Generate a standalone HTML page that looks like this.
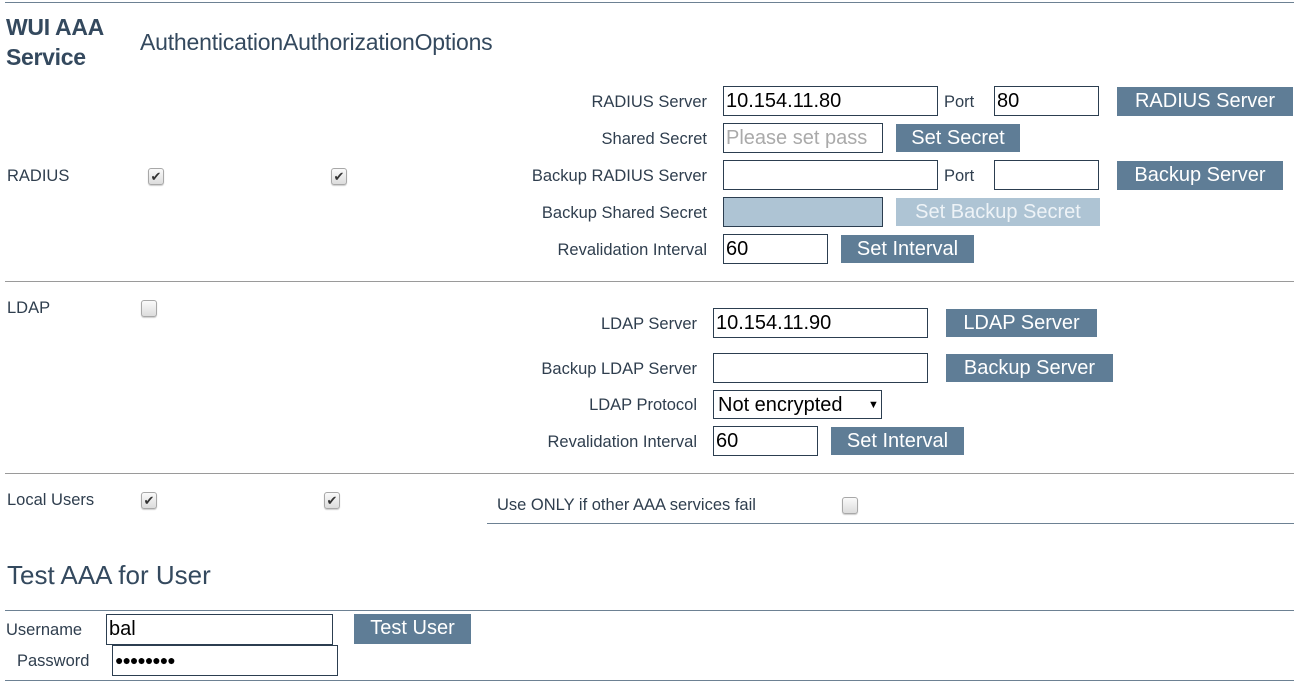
<!DOCTYPE html>
<html><head><meta charset="utf-8"><style>
body{margin:0;width:1294px;height:685px;background:#fff;position:relative;overflow:hidden;font-family:"Liberation Sans","DejaVu Sans",sans-serif;color:#2f3e4e}
div,span{position:absolute;box-sizing:border-box}
.hr{height:1px}
.t{font-size:16.5px;line-height:20px;white-space:nowrap}
.r{text-align:right;left:0}
.i{border:1px solid #2c3e50;background:#fff;font-family:"Liberation Sans",sans-serif;font-size:20px;color:#000;line-height:28px;padding-left:2px;white-space:nowrap;overflow:hidden}
.b{background:#5f7d96;color:#fff;font-family:"Liberation Sans",sans-serif;font-size:20px;text-align:center;line-height:28px;white-space:nowrap}
.c{width:16px;height:17px;border:1px solid #a8a8a8;border-radius:3px;background:linear-gradient(#fafafa,#dcdcdc);box-shadow:0 1px 1px #ccc;font-size:13px;line-height:15px;text-align:center;color:#333}
</style></head><body>
<div class="hr" style="left:5px;top:2px;width:1289px;background:#6d8193"></div>
<div style="left:6px;top:12px;font-size:23px;line-height:30px;font-weight:bold;color:#34495e;letter-spacing:-0.3px">WUI AAA<br>Service</div>
<div style="left:140px;top:27px;font-size:23px;line-height:30px;color:#34495e;letter-spacing:-0.2px">AuthenticationAuthorizationOptions</div>

<div class="t" style="left:7px;top:166px">RADIUS</div>
<div class="c" style="left:148px;top:168px">✔</div>
<div class="c" style="left:331px;top:168px">✔</div>

<div class="t r" style="width:707px;top:92px">RADIUS Server</div>
<div class="i" style="left:723px;top:86px;width:215px;height:30px">10.154.11.80</div>
<div class="t" style="left:944px;top:92px">Port</div>
<div class="i" style="left:994px;top:86px;width:105px;height:30px">80</div>
<div class="b" style="left:1117px;top:87px;width:176px;height:29px">RADIUS Server</div>

<div class="t r" style="width:707px;top:129px">Shared Secret</div>
<div class="i" style="left:723px;top:123px;width:160px;height:30px;color:#aaa">Please set pass</div>
<div class="b" style="left:896px;top:124px;width:124px;height:28px">Set Secret</div>

<div class="t r" style="width:707px;top:166px">Backup RADIUS Server</div>
<div class="i" style="left:723px;top:160px;width:215px;height:30px"></div>
<div class="t" style="left:944px;top:166px">Port</div>
<div class="i" style="left:994px;top:160px;width:105px;height:30px"></div>
<div class="b" style="left:1117px;top:161px;width:166px;height:29px">Backup Server</div>

<div class="t r" style="width:707px;top:203px">Backup Shared Secret</div>
<div class="i" style="left:723px;top:197px;width:160px;height:30px;background:#aec4d4"></div>
<div class="b" style="left:896px;top:198px;width:204px;height:28px;background:#aec4d4;color:#eef3f7">Set Backup Secret</div>

<div class="t r" style="width:707px;top:240px">Revalidation Interval</div>
<div class="i" style="left:723px;top:234px;width:105px;height:30px">60</div>
<div class="b" style="left:841px;top:235px;width:133px;height:28px">Set Interval</div>

<div class="hr" style="left:5px;top:281px;width:1289px;background:#9a9a9a"></div>

<div class="t" style="left:7px;top:298px">LDAP</div>
<div class="c" style="left:141px;top:300px"></div>

<div class="t r" style="width:697px;top:314px">LDAP Server</div>
<div class="i" style="left:713px;top:308px;width:215px;height:30px">10.154.11.90</div>
<div class="b" style="left:946px;top:309px;width:151px;height:28px">LDAP Server</div>

<div class="t r" style="width:697px;top:359px">Backup LDAP Server</div>
<div class="i" style="left:713px;top:353px;width:215px;height:30px"></div>
<div class="b" style="left:946px;top:354px;width:167px;height:28px">Backup Server</div>

<div class="t r" style="width:697px;top:395px">LDAP Protocol</div>
<div class="i" style="left:713px;top:390px;width:169px;height:29px;padding-left:4px">Not encrypted<span style="left:154px;top:0;font-size:11px">▼</span></div>

<div class="t r" style="width:697px;top:432px">Revalidation Interval</div>
<div class="i" style="left:713px;top:426px;width:105px;height:30px">60</div>
<div class="b" style="left:831px;top:427px;width:133px;height:28px">Set Interval</div>

<div class="hr" style="left:5px;top:473px;width:1289px;background:#9a9a9a"></div>

<div class="t" style="left:7px;top:490px">Local Users</div>
<div class="c" style="left:141px;top:492px">✔</div>
<div class="c" style="left:324px;top:492px">✔</div>
<div class="t" style="left:497px;top:495px">Use ONLY if other AAA services fail</div>
<div class="c" style="left:842px;top:497px"></div>
<div class="hr" style="left:487px;top:523px;width:807px;background:#6d8193"></div>

<div style="left:7px;top:559px;font-size:26px;line-height:32px;color:#34495e">Test AAA for User</div>
<div class="hr" style="left:5px;top:610px;width:1289px;background:#6d8193"></div>

<div class="t" style="left:6px;top:620px">Username</div>
<div class="i" style="left:106px;top:614px;width:227px;height:31px">bal</div>
<div class="b" style="left:354px;top:614px;width:117px;height:30px">Test User</div>
<div class="t" style="left:17px;top:651px">Password</div>
<div class="i" style="left:112px;top:645px;width:226px;height:31px;font-size:14px;letter-spacing:-1px">●●●●●●●●</div>
<div class="hr" style="left:5px;top:680px;width:1289px;background:#6d8193"></div>
</body></html>
